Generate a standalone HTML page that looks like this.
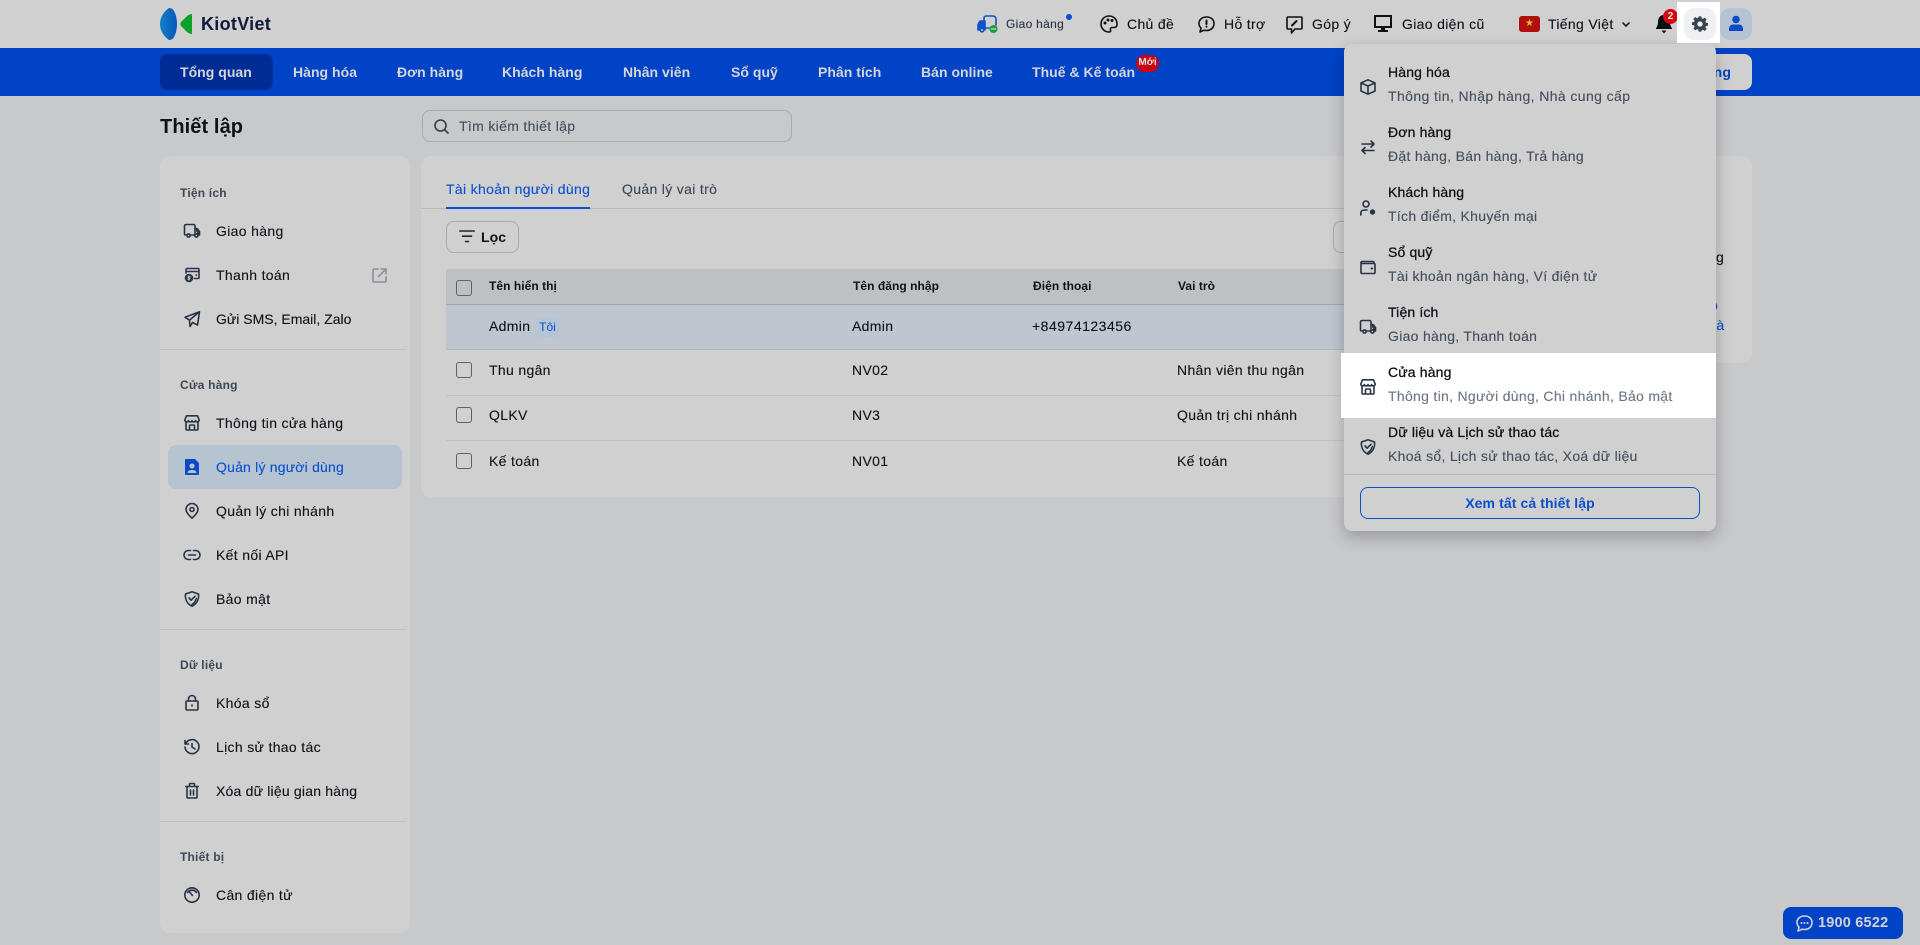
<!DOCTYPE html>
<html lang="vi"><head><meta charset="utf-8"><title>Thiết lập</title>
<style>
*{box-sizing:border-box}
html,body{margin:0;padding:0;width:1920px;height:945px;overflow:hidden;background:#c8c9cb;font-family:"Liberation Sans",sans-serif;color:#0d0f12}
.b{position:absolute}
.t{position:absolute;white-space:nowrap;font-size:14px;line-height:20px;letter-spacing:.33px;color:#0e1116;-webkit-text-stroke:.12px}
svg.i{position:absolute;fill:none;stroke:#283445;stroke-width:1.6;stroke-linecap:round;stroke-linejoin:round;overflow:visible}
.n{color:#d4d6da;font-weight:700;letter-spacing:.03px;top:62px;-webkit-text-stroke:0}
.h{font-size:12px;font-weight:700;color:#3d4756;letter-spacing:.2px;line-height:16px;-webkit-text-stroke:0}
.d{position:absolute;height:1px;background:#bfc1c3}
.th{font-size:12px;font-weight:700;top:276px;letter-spacing:.05px;line-height:20px;-webkit-text-stroke:0}
.sub{color:#424d5c;letter-spacing:.3px}
.ttl{letter-spacing:.15px;-webkit-text-stroke:.28px}
</style></head><body>

<!-- top bar -->
<div class="b" style="left:0;top:0;width:1920px;height:48px;background:#d0d0d0"></div>
<svg class="b" style="left:160px;top:8px" width="34" height="32" viewBox="0 0 34 32"><defs><linearGradient id="g1" x1="0" y1="0" x2="1" y2="0"><stop offset="0" stop-color="#0c83c6"/><stop offset="1" stop-color="#0a55c0"/></linearGradient></defs><path d="M9 0C3 4 0 10 0 16s3 12 9 16c2 0 4-1 5-3 2-4 3-8 3-13S16 7 14 3C13 1 11 0 9 0Z" fill="url(#g1)"/><path d="M32 6v20c-2 0-4-1-6-3l-5-5c-1-1-1-3 0-4l5-5c2-2 4-3 6-3Z" fill="#0aa02a"/></svg>
<div class="t" style="left:201px;top:13px;font-size:18px;line-height:22px;font-weight:700;color:#10193a;letter-spacing:.3px;-webkit-text-stroke:0">KiotViet</div>

<svg class="i" style="left:977px;top:15px;stroke:#0d52c8" width="22" height="18" viewBox="0 0 22 18"><path d="M7 5V3a2 2 0 0 1 2-2h7a3 3 0 0 1 3 3v6"/><path d="M7 13h5"/><path d="M1 15V9.500L3 6h5v9H1Z" fill="#0d52c8"/><circle cx="5" cy="15" r="1.800" fill="#d0d0d0"/><circle cx="16.500" cy="14" r="4" fill="#18a03a" stroke="none"/><path d="M14.500 14h4" stroke="#d0d0d0" stroke-width="1.300"/></svg>
<div class="t" style="left:1006px;top:14px;font-size:12px;letter-spacing:.3px;color:#2a3442">Giao hàng</div>
<div class="b" style="left:1066px;top:14px;width:6px;height:6px;border-radius:50%;background:#0a4fd0"></div>

<svg class="i" style="left:1100px;top:15px;stroke:#111" width="18" height="18" viewBox="0 0 18 18"><path d="M9 1a8 8 0 0 0 0 16c1.500 0 2-1 1.500-2-.6-1.300.2-2.500 1.500-2.500h2.500c1.500 0 2.500-1 2.500-3.500C17 4 13.500 1 9 1Z"/><circle cx="5" cy="8" r=".7" fill="#111"/><circle cx="8" cy="5" r=".7" fill="#111"/><circle cx="12" cy="5.500" r=".7" fill="#111"/></svg>
<div class="t" style="left:1127px;top:14px">Chủ đề</div>
<svg class="i" style="left:1198px;top:16px;stroke:#111" width="17" height="17" viewBox="0 0 17 17"><path d="M8.500 1C4 1 1 3.800 1 7.500c0 1.800.8 3.400 2 4.500l-1 4 4-1.800c.8.200 1.600.3 2.500.3 4.500 0 7.500-3 7.500-7S13 1 8.500 1Z"/><path d="M8.500 4.500v3.500M8.500 10.500v.2" stroke-width="2"/></svg>
<div class="t" style="left:1224px;top:14px">Hỗ trợ</div>
<svg class="i" style="left:1286px;top:16px;stroke:#111" width="17" height="18" viewBox="0 0 17 18"><path d="M2 1h13a1 1 0 0 1 1 1v10a1 1 0 0 1-1 1H9l-3.500 4v-4H2a1 1 0 0 1-1-1V2a1 1 0 0 1 1-1Z"/><path d="M6 9.500 10.500 5" stroke-width="2"/></svg>
<div class="t" style="left:1312px;top:14px">Góp ý</div>
<svg class="b" style="left:1374px;top:15px" width="18" height="18" viewBox="0 0 18 18"><rect x="1" y="1" width="16" height="11" fill="#d0d0d0" stroke="#111" stroke-width="2"/><path d="M7 12h4v3h3v2H4v-2h3Z" fill="#111"/></svg>
<div class="t" style="left:1402px;top:14px">Giao diện cũ</div>
<div class="b" style="left:1519px;top:16px;width:21px;height:16px;border-radius:3px;background:#b40f0f;color:#d9c02a;font-size:10px;line-height:16px;text-align:center">★</div>
<div class="t" style="left:1548px;top:14px">Tiếng Việt</div>
<svg class="i" style="left:1621px;top:21px;stroke:#222" width="10" height="7" viewBox="0 0 10 7"><path d="m2 2 3 3 3-3" stroke-width="1.600"/></svg>
<svg class="b" style="left:1655px;top:14px" width="18" height="20" viewBox="0 0 18 20"><path d="M9 1C5 1 3 4 3 8c0 3-1 5-2 6v1h16v-1c-1-1-2-3-2-6 0-4-2-7-6-7Z" fill="#0b0f14"/><path d="M6.500 16.500h5L9 19.500Z" fill="#0b0f14"/></svg>
<div class="b" style="left:1663px;top:9px;width:15px;height:15px;border-radius:50%;background:#d4060f;color:#e6e6e6;font-size:10px;font-weight:700;line-height:15px;text-align:center">2</div>

<div class="b" style="left:1677px;top:2px;width:43px;height:41px;background:#fff;z-index:5"></div>
<div class="b" style="left:1684px;top:8px;width:32px;height:32px;border-radius:10px;background:#eef0f3;z-index:6"></div>
<svg class="b" style="left:1692px;top:16px;z-index:7" width="16" height="16" viewBox="0 0 24 24"><path fill="#3a434f" fill-rule="evenodd" d="M10 1h4l.6 3.100 1.800.8L19.100 3 22 5.900l-1.900 2.700.8 1.800 3.100.6v4l-3.100.6-.8 1.800 1.900 2.700-2.900 2.900-2.700-1.900-1.800.8L14 24h-4l-.6-3.100-1.800-.8L4.900 22 2 19.100l1.900-2.700-.8-1.800L0 14v-4l3.100-.6.800-1.800L2 4.900 4.900 2l2.700 1.900 1.800-.8ZM12 8.500a4 4 0 1 0 0 8 4 4 0 0 0 0-8Z" transform="translate(0 -.5)"/></svg>
<div class="b" style="left:1720px;top:8px;width:32px;height:32px;border-radius:10px;background:#b6c3d2"></div>
<svg class="b" style="left:1729px;top:15px" width="14" height="17" viewBox="0 0 14 17"><circle cx="7" cy="4.500" r="3.800" fill="#0b4bc4"/><path d="M0 16v-2.500C0 11 2 9.500 4 9.500h6c2 0 4 1.500 4 4V16Z" fill="#0b4bc4"/></svg>

<!-- nav -->
<div class="b" style="left:0;top:48px;width:1920px;height:48px;background:#0043c6"></div>
<div class="b" style="left:160px;top:54px;width:113px;height:36px;border-radius:8px;background:#002c96"></div>
<div class="t n" style="left:180px">Tổng quan</div>
<div class="t n" style="left:293px">Hàng hóa</div>
<div class="t n" style="left:397px">Đơn hàng</div>
<div class="t n" style="left:502px">Khách hàng</div>
<div class="t n" style="left:623px">Nhân viên</div>
<div class="t n" style="left:731px">Sổ quỹ</div>
<div class="t n" style="left:818px">Phân tích</div>
<div class="t n" style="left:921px">Bán online</div>
<div class="t n" style="left:1032px">Thuế &amp; Kế toán</div>
<div class="b" style="left:1136px;top:55px;width:23px;height:17px;border-radius:9px;background:#c9000f;color:#e4e4e4;font-size:10px;line-height:16px;text-align:center;font-weight:700">Mới</div>
<div class="b" style="left:1600px;top:54px;width:152px;height:36px;border-radius:8px;background:#d0d0d0"></div>
<div class="t" style="right:189px;top:62px;color:#0043c6;font-weight:700;letter-spacing:.1px;-webkit-text-stroke:0">Bán hàng</div>

<!-- page head -->
<div class="t" style="left:160px;top:114px;font-size:20px;line-height:26px;font-weight:700;letter-spacing:.1px;-webkit-text-stroke:0">Thiết lập</div>
<div class="b" style="left:422px;top:110px;width:370px;height:32px;border:1px solid #a8aaad;border-radius:8px"></div>
<svg class="i" style="left:434px;top:119px;stroke:#333c48" width="15" height="15" viewBox="0 0 15 15"><circle cx="6.500" cy="6.500" r="5.500"/><path d="m10.500 10.500 3.500 3.500"/></svg>
<div class="t" style="left:459px;top:116px;color:#424d5c">Tìm kiếm thiết lập</div>

<!-- sidebar -->
<div class="b" style="left:160px;top:156px;width:250px;height:777px;border-radius:10px;background:#d0d0d0"></div>
<div class="t h" style="left:180px;top:185px">Tiện ích</div>
<div class="t h" style="left:180px;top:377px">Cửa hàng</div>
<div class="t h" style="left:180px;top:657px">Dữ liệu</div>
<div class="t h" style="left:180px;top:849px">Thiết bị</div>
<div class="d" style="left:160px;top:349px;width:246px"></div>
<div class="d" style="left:160px;top:629px;width:246px"></div>
<div class="d" style="left:160px;top:821px;width:246px"></div>
<div class="b" style="left:168px;top:445px;width:234px;height:44px;border-radius:8px;background:#b6c3d0"></div>
<div class="t" style="left:216px;top:221px">Giao hàng</div>
<div class="t" style="left:216px;top:265px">Thanh toán</div>
<div class="t" style="left:216px;top:309px;letter-spacing:0">Gửi SMS, Email, Zalo</div>
<div class="t" style="left:216px;top:413px">Thông tin cửa hàng</div>
<div class="t" style="left:216px;top:457px;color:#0a50d0;letter-spacing:.2px">Quản lý người dùng</div>
<div class="t" style="left:216px;top:501px">Quản lý chi nhánh</div>
<div class="t" style="left:216px;top:545px">Kết nối API</div>
<div class="t" style="left:216px;top:589px">Bảo mật</div>
<div class="t" style="left:216px;top:693px">Khóa sổ</div>
<div class="t" style="left:216px;top:737px">Lịch sử thao tác</div>
<div class="t" style="left:216px;top:781px;letter-spacing:.2px">Xóa dữ liệu gian hàng</div>
<div class="t" style="left:216px;top:885px">Cân điện tử</div>

<svg class="i" style="left:184px;top:223px" width="16" height="16" viewBox="0 0 16 16"><path d="M3 12H1.500a1 1 0 0 1-1-1V3a1.500 1.500 0 0 1 1.500-1.500h7.500A1.500 1.500 0 0 1 11 3v9H6"/><path d="M11 5.500h2l2.500 3V12H14" fill="#283445"/><circle cx="4.500" cy="12.500" r="1.600"/><circle cx="12.300" cy="12.500" r="1.600" fill="#d0d0d0"/></svg>
<svg class="i" style="left:184px;top:267px" width="16" height="16" viewBox="0 0 16 16"><path d="M2 6V2.500a1 1 0 0 1 1-1h11a1 1 0 0 1 1 1v8a1 1 0 0 1-1 1h-3.500M2 4.500h13M12 8h.5"/><circle cx="5" cy="11" r="4.300" fill="#283445" stroke="none"/><path d="M5 8.800v4.400M6.200 9.700H4.500a.7.700 0 0 0 0 1.300h1a.7.700 0 0 1 0 1.300H3.800" stroke="#d0d0d0" stroke-width=".8"/></svg>
<svg class="i" style="left:184px;top:311px" width="16" height="16" viewBox="0 0 16 16"><path d="M15.500.8 1 6.300l4.500 2.800L15.500.8 13.500 14 8.500 11.500l-2.500 4-.5-6.400"/></svg>
<svg class="i" style="left:372px;top:268px;stroke:#8a8f97" width="15" height="15" viewBox="0 0 15 15"><path d="M6 1H2a1 1 0 0 0-1 1v11a1 1 0 0 0 1 1h11a1 1 0 0 0 1-1V9M9 1h5v5M14 1 6.500 8.500"/></svg>
<svg class="i" style="left:184px;top:415px" width="16" height="16" viewBox="0 0 16 16"><path d="M2.500.8h11l1.700 4.200c0 2.400-3.300 2.400-3.600.5-.3 1.900-3.300 1.900-3.600 0-.3 1.900-3.300 1.900-3.600 0C4.100 7.400.8 7.400.8 5ZM2 7.500V14a1 1 0 0 0 1 1h10a1 1 0 0 0 1-1V7.500M5.500 15v-4a1 1 0 0 1 1-1h3a1 1 0 0 1 1 1v4"/></svg>
<svg class="b" style="left:185px;top:459px" width="14" height="16" viewBox="0 0 14 16"><path d="M1 0h9l4 4v11a1 1 0 0 1-1 1H1a1 1 0 0 1-1-1V1a1 1 0 0 1 1-1Z" fill="#0b4bc4"/><circle cx="7" cy="7" r="2.500" fill="#b6c3d0"/><path d="M2.500 14c0-2 2-3 4.500-3s4.500 1 4.500 3Z" fill="#b6c3d0"/></svg>
<svg class="i" style="left:185px;top:503px" width="14" height="16" viewBox="0 0 14 16"><path d="M7 15.200C4 12.500 1 9.500 1 6.500a6 6 0 0 1 12 0c0 3-3 6-6 8.700Z"/><circle cx="7" cy="6.500" r="2"/></svg>
<svg class="i" style="left:184px;top:547px" width="16" height="16" viewBox="0 0 16 16"><path d="M6.500 3.500h-2a4.500 4.500 0 0 0 0 9h2M9.500 3.500h2a4.500 4.500 0 0 1 0 9h-2M4.500 8h7"/></svg>
<svg class="i" style="left:184px;top:591px" width="16" height="16" viewBox="0 0 16 16"><path d="M8 .8 14.500 3c.5 4.500-1 9.500-6.500 12.200C2.500 12.500 1 7.500 1.500 3Z"/><path d="m5 7 2.200 2.200L11 5.300M12.300 7.500c-.5 2.500-2 4.600-4.300 6"/></svg>
<svg class="i" style="left:185px;top:695px" width="14" height="16" viewBox="0 0 14 16"><rect x="1" y="6" width="12" height="9" rx="1"/><path d="M3.500 6V4a3.500 3.500 0 0 1 7 0v2M7 10v1" /></svg>
<svg class="i" style="left:184px;top:739px" width="16" height="16" viewBox="0 0 16 16"><path d="M1.500 5a7 7 0 1 1-.5 3M1 1.500V5h3.500M8 4.500V8l3 2"/></svg>
<svg class="i" style="left:185px;top:783px" width="14" height="16" viewBox="0 0 14 16"><path d="M.8 3.500h12.400M4.500 3.500V1.500a1 1 0 0 1 1-1h3a1 1 0 0 1 1 1v2M2 3.500V14a1 1 0 0 0 1 1h8a1 1 0 0 0 1-1V3.500M5.500 7v5M8.500 7v5"/></svg>
<svg class="i" style="left:184px;top:887px" width="16" height="16" viewBox="0 0 16 16"><circle cx="8" cy="8" r="7.200"/><path d="M3.500 5.500a5.500 5.500 0 0 1 9 0M5.500 5 8.500 8.500"/></svg>

<!-- main card -->
<div class="b" style="left:421px;top:156px;width:1000px;height:341px;border-radius:10px;background:#d0d0d0"></div>
<div class="b" style="left:1421px;top:156px;width:331px;height:207px;border-radius:0 10px 10px 0;background:#d0d0d0"></div>
<div class="t" style="left:446px;top:179px;color:#0a50d0">Tài khoản người dùng</div>
<div class="t" style="left:622px;top:179px;color:#3a4553">Quản lý vai trò</div>
<div class="b" style="left:421px;top:208px;width:1000px;height:1px;background:#b5b8bc"></div>
<div class="b" style="left:446px;top:207px;width:144px;height:2px;background:#0a50d0"></div>
<div class="b" style="left:446px;top:221px;width:73px;height:32px;border:1px solid #a8aaad;border-radius:8px"></div>
<svg class="i" style="left:459px;top:229px;stroke:#1c2530" width="16" height="16" viewBox="0 0 16 16"><path d="M.8 2h14.400M3.500 7.200h9M6.500 12.500h3"/></svg>
<div class="t" style="left:481px;top:227px;font-weight:700;letter-spacing:.1px;-webkit-text-stroke:0">Lọc</div>
<div class="b" style="left:1333px;top:221px;width:60px;height:32px;border:1px solid #a8aaad;border-radius:8px"></div>
<div class="b" style="left:446px;top:269px;width:975px;height:36px;background:#bfc0c2;border-bottom:1px solid #a4a7ab"></div>
<div class="b" style="left:446px;top:305px;width:975px;height:45px;background:#bfc6d0;border-bottom:1px solid #b2b5ba"></div>
<div class="d" style="left:446px;top:395px;width:975px"></div>
<div class="d" style="left:446px;top:440px;width:975px"></div>
<div class="b" style="left:456px;top:280px;width:16px;height:16px;border:1.500px solid #59626e;border-radius:3px"></div>
<div class="b" style="left:456px;top:362px;width:16px;height:16px;border:1.500px solid #59626e;border-radius:3px"></div>
<div class="b" style="left:456px;top:407px;width:16px;height:16px;border:1.500px solid #59626e;border-radius:3px"></div>
<div class="b" style="left:456px;top:453px;width:16px;height:16px;border:1.500px solid #59626e;border-radius:3px"></div>
<div class="t th" style="left:489px">Tên hiển thị</div>
<div class="t th" style="left:853px">Tên đăng nhập</div>
<div class="t th" style="left:1033px">Điện thoại</div>
<div class="t th" style="left:1178px">Vai trò</div>
<div class="t" style="left:489px;top:316px">Admin</div>
<div class="b" style="left:535px;top:317px;width:25px;height:20px;border-radius:4px;background:#b4c5d6;color:#0a50d0;font-size:12px;line-height:20px;text-align:center">Tôi</div>
<div class="t" style="left:852px;top:316px">Admin</div>
<div class="t" style="left:1032px;top:316px;letter-spacing:.5px">+84974123456</div>
<div class="t" style="left:489px;top:360px">Thu ngân</div>
<div class="t" style="left:852px;top:360px">NV02</div>
<div class="t" style="left:1177px;top:360px">Nhân viên thu ngân</div>
<div class="t" style="left:489px;top:405px">QLKV</div>
<div class="t" style="left:852px;top:405px">NV3</div>
<div class="t" style="left:1177px;top:405px">Quản trị chi nhánh</div>
<div class="t" style="left:489px;top:451px">Kế toán</div>
<div class="t" style="left:852px;top:451px">NV01</div>
<div class="t" style="left:1177px;top:451px">Kế toán</div>

<!-- right card fragments -->
<div class="t" style="left:1716px;top:247px">g</div>
<div class="t" style="left:1710px;top:295px;color:#0a50d0">o</div>
<div class="t" style="left:1709px;top:315px;color:#0a50d0">và</div>

<!-- dropdown -->
<div class="b" style="left:1344px;top:44px;width:372px;height:487px;border-radius:8px;background:#d0d0d0;box-shadow:0 6px 16px rgba(0,0,0,.25);z-index:3"></div>
<div style="position:absolute;left:0;top:0;z-index:4">
<div class="b" style="left:1341px;top:353px;width:375px;height:65px;background:#fff"></div>
<div class="t ttl" style="left:1388px;top:62px">Hàng hóa</div><div class="t sub" style="left:1388px;top:86px;letter-spacing:.4px">Thông tin, Nhập hàng, Nhà cung cấp</div>
<div class="t ttl" style="left:1388px;top:122px">Đơn hàng</div><div class="t sub" style="left:1388px;top:146px">Đặt hàng, Bán hàng, Trả hàng</div>
<div class="t ttl" style="left:1388px;top:182px">Khách hàng</div><div class="t sub" style="left:1388px;top:206px">Tích điểm, Khuyến mại</div>
<div class="t ttl" style="left:1388px;top:242px">Sổ quỹ</div><div class="t sub" style="left:1388px;top:266px">Tài khoản ngân hàng, Ví điện tử</div>
<div class="t ttl" style="left:1388px;top:302px">Tiện ích</div><div class="t sub" style="left:1388px;top:326px">Giao hàng, Thanh toán</div>
<div class="t ttl" style="left:1388px;top:362px">Cửa hàng</div><div class="t sub" style="left:1388px;top:386px;color:#6c7683">Thông tin, Người dùng, Chi nhánh, Bảo mật</div>
<div class="t ttl" style="left:1388px;top:422px">Dữ liệu và Lịch sử thao tác</div><div class="t sub" style="left:1388px;top:446px">Khoá sổ, Lịch sử thao tác, Xoá dữ liệu</div>
<div class="b" style="left:1344px;top:474px;width:372px;height:1px;background:#b5b7ba"></div>
<div class="b" style="left:1360px;top:487px;width:340px;height:32px;border:1px solid #0a4fc8;border-radius:8px;color:#0a4fc8;font-size:14px;font-weight:700;line-height:30px;text-align:center;letter-spacing:.1px">Xem tất cả thiết lập</div>

<svg class="i" style="left:1360px;top:79px" width="16" height="16" viewBox="0 0 16 16"><path d="M8 .8 15 4v8l-7 3.200L1 12V4ZM1 4l7 3 7-3M8 7v8.200"/></svg>
<svg class="i" style="left:1360px;top:139px" width="16" height="16" viewBox="0 0 16 16"><path d="M2 5h12M11 2l3 3-3 3M14 11.500H2M5 8.500l-3 3 3 3"/></svg>
<svg class="i" style="left:1360px;top:200px" width="16" height="16" viewBox="0 0 16 16"><circle cx="6" cy="4" r="3"/><path d="M.8 15v-2c0-2 1.700-3 3.700-3H7"/><circle cx="12.500" cy="12" r="2.700" fill="#283445" stroke="none"/></svg>
<svg class="i" style="left:1360px;top:259px" width="16" height="16" viewBox="0 0 16 16"><path d="M2 2.500h11a1 1 0 0 1 1 1M1 3.500v10a1 1 0 0 0 1 1h12a1 1 0 0 0 1-1v-8a1 1 0 0 0-1-1H2a1 1 0 0 1-1-1 1 1 0 0 1 1-1"/><path d="M11.500 9.500h.6" stroke-width="2"/></svg>
<svg class="i" style="left:1360px;top:319px" width="16" height="16" viewBox="0 0 16 16"><path d="M3 12H1.500a1 1 0 0 1-1-1V3a1.500 1.500 0 0 1 1.500-1.500h7.500A1.500 1.500 0 0 1 11 3v9H6"/><path d="M11 5.500h2l2.500 3V12H14" fill="#283445"/><circle cx="4.500" cy="12.500" r="1.600"/><circle cx="12.300" cy="12.500" r="1.600" fill="#d0d0d0"/></svg>
<svg class="i" style="left:1360px;top:379px" width="16" height="16" viewBox="0 0 16 16"><path d="M2.500.8h11l1.700 4.200c0 2.400-3.300 2.400-3.600.5-.3 1.900-3.300 1.900-3.600 0-.3 1.900-3.300 1.900-3.600 0C4.100 7.400.8 7.400.8 5ZM2 7.500V14a1 1 0 0 0 1 1h10a1 1 0 0 0 1-1V7.500M5.500 15v-4a1 1 0 0 1 1-1h3a1 1 0 0 1 1 1v4"/></svg>
<svg class="i" style="left:1360px;top:439px" width="16" height="16" viewBox="0 0 16 16"><path d="M8 .8 14.500 3c.5 4.500-1 9.500-6.500 12.200C2.500 12.500 1 7.500 1.500 3Z"/><path d="m5 7 2.200 2.200L11 5.300M12.300 7.500c-.5 2.500-2 4.600-4.300 6"/></svg>
</div>

<!-- phone -->
<div class="b" style="left:1783px;top:907px;width:120px;height:32px;border-radius:8px;background:#0043c6"></div>
<svg class="i" style="left:1796px;top:915px;stroke:#d0d2d6" width="17" height="17" viewBox="0 0 17 17"><path d="M8.500 1C4 1 1 3.800 1 7.500c0 1.800.8 3.400 2 4.500l-1 4 4-1.800c.8.200 1.600.3 2.500.3 4.500 0 7.500-3 7.500-7S13 1 8.500 1Z"/><path d="M5.500 8h.1M8.500 8h.1M11.500 8h.1" stroke-width="2"/></svg>
<div class="t" style="left:1818px;top:913px;color:#d0d2d6;font-weight:700;font-size:14.500px;letter-spacing:.2px;-webkit-text-stroke:0">1900 6522</div>
</body></html>
